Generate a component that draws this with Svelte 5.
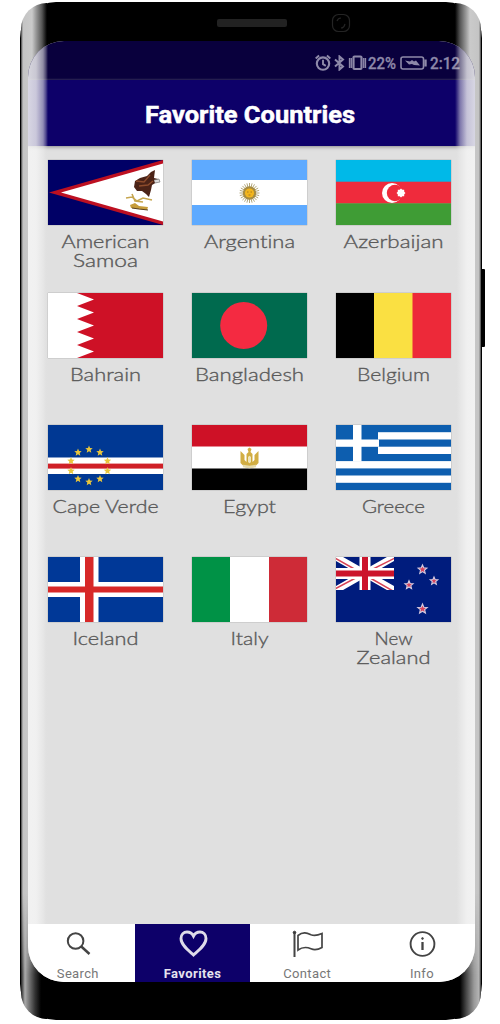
<script>
  function star(cx, cy, r, fill, extra = '') {
    let pts = '';
    for (let i = 0; i < 10; i++) {
      const a = (Math.PI / 5) * i - Math.PI / 2;
      const q = i % 2 ? r * 0.45 : r;
      pts += `${(cx + q * Math.cos(a)).toFixed(2)},${(cy + q * Math.sin(a)).toFixed(2)} `;
    }
    return `<polygon points="${pts}" fill="${fill}" ${extra}/>`;
  }
  const bands = (...b) => b.map(([x, y, w, h, f]) => `<rect x="${x}" y="${y}" width="${w}" height="${h}" fill="${f}"/>`).join('');

  let rays = '';
  for (let i = 0; i < 24; i++) {
    const a = (Math.PI / 12) * i;
    rays += `<path d="M57.5 33L${57.5 + 10 * Math.cos(a)} ${33 + 10 * Math.sin(a)}" stroke="#b3a77c" stroke-width="1"/>`;
  }
  const cvStars = [[41, 24.5], [30, 27.5], [52, 27.5], [23, 36], [59.5, 36], [23, 46], [59.5, 46], [30, 54], [52, 54], [41, 57]];
  const azPoints = [];
  for (let i = 0; i < 16; i++) {
    const a = (Math.PI / 8) * i;
    const q = i % 2 ? 3.5 : 4.5;
    azPoints.push(`${65 + q * Math.cos(a)},${33 + q * Math.sin(a)}`);
  }

  const countries = [
    {
      lines: [['American', 88], ['Samoa', 65]],
      flag: bands([0, 0, 115, 65, '#000066']) +
        '<path d="M1 32.5L115 0V65Z" fill="#bd1021"/><path d="M13 32.5L115 3.5V61.5Z" fill="#fff"/>' +
        '<path d="M107 10L106 18 110 19 109 22 104 25 103 30 101 37 98 34 94 31 89 31 86 27 87 21 92 18 99 16 103 12Z" fill="#4b2317"/>' +
        '<path d="M88 21l8 1 6-7M91 26l9-1 5-4" stroke="#8d4c2c" fill="none" stroke-width="1.3"/><path d="M106 20l5-1 1 3-5 1" fill="#ddd" stroke="#666" stroke-width=".6"/>' +
        '<path d="M78 38l6-1 5 4 6-3 9 2M84 34l3 7 8 1" stroke="#c6a650" stroke-width="1.6" fill="none"/><path d="M82 45l5-2 4 3 9 1-1 3-8-1-8-1z" fill="#c69c3a"/><path d="M84 48l7 1 9 1" stroke="#59401d" stroke-width="1.2" fill="none"/>'
    },
    {
      lines: [['Argentina', 91]],
      flag: bands([0, 0, 115, 65, '#5eaaff'], [0, 20, 115, 25, '#fff']) + rays +
        '<circle cx="57.5" cy="33" r="6.7" fill="#a58b42"/><circle cx="57.5" cy="33" r="4.6" fill="#f2b51d"/><path d="M55 32h1.5M58.500 32H60M56.500 35h2" stroke="#9d701c" stroke-width=".8"/>'
    },
    {
      lines: [['Azerbaijan', 100]],
      flag: bands([0, 0, 115, 22, '#00b9e8'], [0, 21.7, 115, 22, '#ef2b3c'], [0, 43.3, 115, 21.7, '#3f9c35']) +
        `<circle cx="56" cy="33" r="10" fill="#fff"/><circle cx="59" cy="33" r="8.200" fill="#ef2b3c"/><polygon points="${azPoints.join(' ')}" fill="#fff"/>`
    },
    {
      lines: [['Bahrain', 71]],
      flag: bands([0, 0, 115, 65, '#fff']) + '<path d="M115 0H29L46 6.500 29 13 46 19.500 29 26 46 32.500 29 39 46 45.500 29 52 46 58.500 29 65H115Z" fill="#ce1126"/>'
    },
    {
      lines: [['Bangladesh', 109]],
      flag: bands([0, 0, 115, 65, '#006a4e']) + '<circle cx="51.700" cy="32.500" r="23.500" fill="#f42a41"/>'
    },
    {
      lines: [['Belgium', 73]],
      flag: bands([0, 0, 38.5, 65, '#000'], [38, 0, 39, 65, '#fae042'], [76.5, 0, 38.5, 65, '#ed2939'])
    },
    {
      lines: [['Cape Verde', 106]],
      flag: bands([0, 0, 115, 65, '#003893'], [0, 32.5, 115, 16.5, '#fff'], [0, 38.6, 115, 5, '#cf2027']) +
        cvStars.map(([x, y]) => star(x, y, 3.9, '#e9c63b')).join('')
    },
    {
      lines: [['Egypt', 53]],
      flag: bands([0, 0, 115, 65, '#fff'], [0, 0, 115, 21.5, '#ce1126'], [0, 43.5, 115, 21.5, '#000']) +
        '<path d="M48.500 26l4 4v5l2 2v-8l2-2-1-3 2-1.500 2 1.500-1 3 2 2v8l2-2v-5l4-4v12l-4 4-5 1-5-1-4-4z" fill="#d2ae43"/><path d="M57.500 30l2 2v5l-2 2-2-2v-5z" fill="#f0e5b8" stroke="#c7a027" stroke-width=".8"/><path d="M51 41l6.500 1L64 41" stroke="#e5dbaf" stroke-width="2.500" fill="none"/>'
    },
    {
      lines: [['Greece', 63]],
      flag: bands([0, 0, 115, 65, '#0d5eaf'], [42, 7.2, 73, 7.3, '#fff'], [42, 21.7, 73, 7.3, '#fff'], [0, 36.1, 115, 7.3, '#fff'], [0, 50.5, 115, 7.3, '#fff'], [0, 14.5, 43, 7.3, '#fff'], [17, 0, 8.5, 36.5, '#fff'])
    },
    {
      lines: [['Iceland', 66]],
      flag: bands([0, 0, 115, 65, '#003897'], [32, 0, 18.5, 65, '#fff'], [0, 25, 115, 15, '#fff'], [37, 0, 8.5, 65, '#d72828'], [0, 29.5, 115, 6, '#d72828'])
    },
    {
      lines: [['Italy', 38]],
      flag: bands([0, 0, 38.5, 65, '#009246'], [38, 0, 39, 65, '#fff'], [77, 0, 38, 65, '#ce2b37'])
    },
    {
      lines: [['New', 38], ['Zealand', 74]],
      flag: bands([0, 0, 115, 65, '#001c7d']) +
        '<svg x="0" y="0" width="58" height="33" viewBox="0 0 58 33"><path d="M0 0L58 33M58 0L0 33" stroke="#fff" stroke-width="7"/><path d="M-1 1L29 18 57 34M59 1L29 16 -1 32" stroke="#cc142b" stroke-width="1.500" fill="none" opacity=".8"/><path d="M29 0V33M0 16.500H58" stroke="#fff" stroke-width="11"/><path d="M29 0V33M0 16.500H58" stroke="#cc142b" stroke-width="6"/></svg>' +
        [[86.5, 12.5, 4.6], [98, 24, 4], [73, 28, 4.3], [86.5, 52, 5]].map(([x, y, r]) => star(x, y, r, '#d9435c', 'stroke="#d4cbe0" stroke-width="1.1"')).join('')
    }
  ];

  const tabs = [
    { name: 'Search', icon: '<circle cx="17.600" cy="17" r="7.800" stroke-width="2"/><path d="M23.300 22.500L31.500 30" stroke-width="2.500"/>' },
    { name: 'Favorites', active: true, icon: '<path d="M20.500 31C15.500 26.500 8 21 8 14.500C8 10.500 10.800 8 14 8C17 8 19.300 9.600 20.500 12C21.700 9.600 24 8 27 8C30.200 8 33 10.500 33 14.500C33 21 25.500 26.500 20.500 31Z" stroke-width="2.900"/>' },
    { name: 'Contact', icon: '<path d="M7.500 8V33" stroke-width="2"/><circle cx="7.500" cy="8.500" r="1.300" fill="#333" stroke-width="1"/><path d="M11 11.500C16 7.500 20 9 24 10.700C28 12.200 31 11.200 35 9.500V23.500C31 25.700 28 26.500 24 24.800C20 23 16 22.500 11 26Z" stroke-width="1.700"/>' },
    { name: 'Info', icon: '<circle cx="20.500" cy="20" r="11.900" stroke-width="1.900"/><path d="M20.500 18V26" stroke-width="2.300"/><circle cx="20.500" cy="14.500" r=".9" fill="#444" stroke-width=".8"/>' }
  ];
</script>

<main>
  <div class="phone">
    <i class="shine left"></i><i class="shine right"></i><i class="button"></i>
    <div class="top"><span class="speaker"></span><svg class="camera" width="20" height="20" viewBox="0 0 20 20"><rect x="1.500" y="1.500" width="17" height="17" rx="6" /><path d="M6 8q1-3 4-3M14 11q-1 4-4 4" /></svg></div>
    <div class="screen">
      <div class="status">
        <svg width="18" height="18" viewBox="0 0 15 16"><circle cx="7.500" cy="8.500" r="5.500" stroke-width="1.900" /><path d="M7.500 5v4l2.500 1.500M1 4l3-2.700M14 4l-3-2.700" stroke-width="1.700" /></svg>
        <svg class="bt" width="11" height="16" viewBox="0 0 11 16"><path d="M1 4.500L9 11.500 5.500 14.500V1.500L9 4.500 1 11.500" stroke-width="2" /></svg>
        <svg class="vib" width="19" height="16" viewBox="0 0 19 16"><rect x="5.500" y="1.500" width="8" height="12.500" rx="1" stroke-width="2.200" /><path d="M3.200 3v10M15.800 3v10" stroke-width="1.500" /><path d="M1.500 3v10M17.500 3v10" stroke-width="1.300" /></svg>
        <svg class="pct" width="30" height="24"><text x="1" y="18" textLength="28" lengthAdjust="spacingAndGlyphs">22%</text></svg>
        <svg class="bat" width="27" height="14" viewBox="0 0 27 14"><rect x="1" y="1" width="22.500" height="12" rx="2" stroke-width="1.600" /><path d="M25.500 3.500v7" stroke-width="2.400" /><path d="M5 4.500l5 1 2-1.500 2 1.500 2-1 4 5-6-.5-2-1-3 .5z" fill="#8e89a9" stroke="none" /></svg>
        <svg class="time" width="32" height="24"><text x="1" y="18" textLength="30" lengthAdjust="spacingAndGlyphs">2:12</text></svg>
      </div>
      <header>
        <svg width="220" height="34"><text x="4" y="27" textLength="210" lengthAdjust="spacingAndGlyphs">Favorite Countries</text></svg>
      </header>
      <section class="grid">
        {#each countries as c}
          <article>
            <svg class="flag" width="115" height="65" viewBox="0 0 115 65">{@html c.flag}</svg>
            <svg class="label" width="130" height="48">
              {#each c.lines as [word, width], i}
                <text x={64.5 - width / 2} y={22.5 + i * 19.3} textLength={width} lengthAdjust="spacingAndGlyphs">{word}</text>
              {/each}
            </svg>
          </article>
        {/each}
      </section>
      <nav>
        {#each tabs as t}
          <div class="tab" class:active={t.active}>
            <svg width="40" height="40" viewBox="0 0 40 40">{@html t.icon}</svg>
            <span>{t.name}</span>
          </div>
        {/each}
      </nav>
      <i class="glare gl"></i><i class="glare gr"></i>
    </div>
  </div>
</main>

<style>
  :global(body) { background: #fff; }
  main { width: 500px; height: 1024px; overflow: hidden; padding: 2px 0 0 20px; box-sizing: border-box; }
  .phone { position: relative; width: 462px; height: 1018px; box-sizing: border-box; background: #000; border-radius: 36px; padding: 0 7.5px; }
  .shine { position: absolute; top: 1px; bottom: 1px; width: 26px; }
  .left { left: 1px; border-radius: 35px 0 0 35px; background: linear-gradient(90deg, #444 0, #c4c4c4 2px, #cacaca 11px, #999 15px, #555 21px, #000 26px); }
  .right { right: 1px; border-radius: 0 35px 35px 0; background: linear-gradient(270deg, #444 0, #c4c4c4 2px, #cacaca 11px, #999 15px, #555 21px, #000 26px); }
  .shine::after { content: ''; position: absolute; left: 0; right: 0; bottom: 0; height: 125px; -webkit-mask-image: linear-gradient(transparent, #000 80px); mask-image: linear-gradient(transparent, #000 80px); }
  .left::after { border-radius: 0 0 0 35px; background: linear-gradient(90deg, #222 0, #666 2px, #aaa 4px, #777 8px, #333 14px, #000 20px); }
  .right::after { border-radius: 0 0 35px 0; background: linear-gradient(270deg, #333 0, #b5b5b5 2px, #999 7px, #444 15px, #000 21px); }
  .button { position: absolute; right: -3px; top: 267px; width: 4px; height: 78px; border-radius: 1px; background: #000; }
  .top { position: relative; height: 39px; }
  .speaker { position: absolute; left: 189px; top: 17px; width: 70px; height: 8px; border-radius: 2px; background: #222; }
  .camera { position: absolute; left: 303px; top: 11px; fill: none; stroke: #242424; stroke-width: 1.2; }
  .screen { position: relative; width: 447px; height: 941px; border-radius: 36px; overflow: hidden; background: #e0e0e0; display: flex; flex-direction: column; }
  .status { height: 39px; flex: none; background: #09003d; display: flex; align-items: center; padding: 5px 14px 0 0; box-sizing: border-box; justify-content: flex-end; }
  .status svg { fill: none; stroke: #8e89a9; flex: none; }
  .status text { font: 500 17px Roboto, sans-serif; fill: #8e89a9; stroke: #8e89a9; stroke-width: 0.3px; }
  .bt { margin-left: 2px; }
  .vib { margin-left: 3px; }
  .bat { margin: 0 2px 0 3px; }
  header { height: 67px; flex: none; background: #0d0069; display: flex; justify-content: center; align-items: center; border-bottom: 1px solid #aaa; box-sizing: border-box; box-shadow: 0 1px 3px #aaa; }
  header text { font: 700 24px Roboto, sans-serif; fill: #fff; stroke: #fff; stroke-width: 0.5px; }
  .grid { flex: 1; display: grid; grid-template-columns: repeat(3, 144.2px); grid-auto-rows: 132.3px; padding: 13.3px 0 0 6px; align-content: start; }
  article { display: flex; flex-direction: column; align-items: center; }
  .flag { display: block; box-shadow: 0 0 1px #777; flex: none; }
  .label { flex: none; }
  .label text { font: 300 17.5px Lato, sans-serif; font-variant-ligatures: none; fill: #5a5a5a; stroke: #5a5a5a; stroke-width: 0.35px; }
  nav { height: 58px; flex: none; display: flex; background: #fff; margin-left: -7px; width: 459px; }
  .tab { width: 114.700px; flex: none; display: flex; flex-direction: column; align-items: center; box-sizing: border-box; color: #777; font: 400 13px/16px Roboto, sans-serif; }
  .tab svg { fill: none; stroke: #444; flex: none; }
  .tab span { margin-top: 1.5px; letter-spacing: 0.35px; }
  .tab.active { background: #0d0069; color: #e5e2ef; font-weight: 700; }
  .tab.active span { letter-spacing: 0.4px; }
  .tab.active svg { stroke: #dedbe9; }
  .glare { position: absolute; top: 0; bottom: 58px; width: 20px; }
  .gl { left: 0; background: linear-gradient(90deg, rgba(244,244,244,.88), rgba(244,244,244,.82) 8px, rgba(235,235,235,.6) 15px, rgba(226,226,226,.3) 18px, rgba(224,224,224,0)); }
  .gr { right: 0; background: linear-gradient(270deg, rgba(244,244,244,.88), rgba(244,244,244,.8) 8px, rgba(235,235,235,.5) 15px, rgba(226,226,226,.2) 18px, rgba(224,224,224,0)); }
</style>
